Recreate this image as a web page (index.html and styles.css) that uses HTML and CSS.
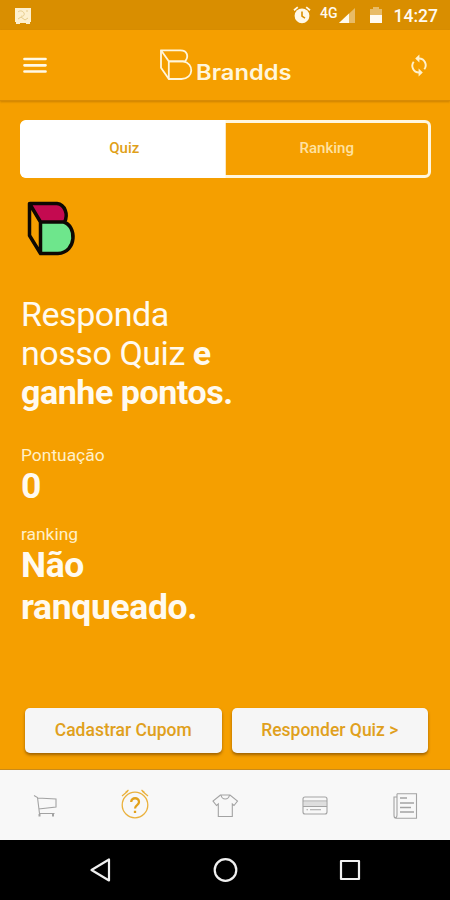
FILE: index.html
```
<!DOCTYPE html>
<html lang="pt-BR">
<head>
    <meta charset="UTF-8">
    <meta name="viewport" content="width=device-width, initial-scale=1">
    <title>Brandds - Quiz</title>
    <link rel="stylesheet" href="styles.css">
</head>
<body>
    <div class="app">
        <div class="status">
            <svg class="notice" width="18" height="18" viewBox="0 0 18 18">
                <path d="M1 1h16v14h-1v2h-4v-1H6v1H2v-2H1z" fill="#fdf0cf"/>
                <path d="M4 5c2-2 5-1 6 1s-1 4-3 3M4 12l3-2 4 3 3-2M12 4h2" fill="none" stroke="#e6cb8c"/>
            </svg>
            <svg class="alarm" width="18" height="18" viewBox="0 0 18 18">
                <circle cx="9" cy="9.8" r="7.4" fill="#fff8e8"/>
                <path d="M1 4.2l3.8-3.1M17 4.2l-3.8-3.1" stroke="#fff8e8" stroke-width="1.8"/>
                <path d="M9 5.5v4.6l3 2" fill="none" stroke="#d98e00" stroke-width="1.6"/>
            </svg>
            <span class="network">4G</span>
            <svg class="signal" width="17" height="16" viewBox="0 0 17 16">
                <path d="M16 0v15H0z" fill="#fff" opacity=".4"/>
                <path d="M10 5.6V15H0z" fill="#fffaf0"/>
            </svg>
            <svg class="battery" width="12" height="17" viewBox="0 0 12 17">
                <path d="M0 2h3V0h6v2h3v7H0z" fill="#fff" opacity=".4"/>
                <path d="M0 8h12v8H0z" fill="#fffaf0"/>
            </svg>
            <span class="time">14:27</span>
        </div>

        <header class="header">
            <svg class="menu" width="24" height="18" viewBox="0 0 24 18">
                <path d="M1.5 3h21M1.5 9.3h21M1.5 15.5h21" stroke="#fff9e6" stroke-width="2.7" stroke-linecap="round"/>
            </svg>
            <div class="brand">
                <svg width="35" height="36" viewBox="0 0 35 36">
                    <path d="M2 3.3h19.5c7 0 8.5 6.5 4.5 11H9.8z"/>
                    <path d="M9.8 14.3H24c11.5 1.5 11 17.7-1.5 17.7H9.8z"/>
                    <path d="M2 3.3v17.4L9.8 32"/>
                </svg>
                <span class="brand-name">Brandds</span>
            </div>
            <svg class="sync" width="18" height="24" viewBox="0 0 18 24">
                <path d="M9 5.5c5.6 0 8.6 6.3 5.3 10.8M9 19.5c-5.6 0-8.6-6.3-5.3-10.8" fill="none" stroke="#fff1cc" stroke-width="1.9"/>
                <path d="M9.4 1.5v8l-4.2-4zM8.6 15.5v8l4.2-4z" fill="#fff1cc"/>
            </svg>
        </header>

        <main class="content">
            <div class="segment">
                <button class="active">Quiz</button>
                <button>Ranking</button>
            </div>

            <svg class="logo" width="52" height="56" viewBox="0 0 52 56">
                <path d="M3.5 3.5l11 18.5v31.5L3.5 35.5z" fill="#f59f00"/>
                <path d="M3.5 3.5H31c9 2 10 12 7 18.5H14.5z" fill="#c40a50"/>
                <path d="M14.5 22H36c15 3 15 31-4 31.5H14.5z" fill="#6ee68c"/>
                <path d="M3.5 3.5H31c8 1 11.5 11 7.5 18.5h-24L3.5 3.5v32l11 18H32c19-1 19-28 5.5-31.5M14.5 22v31.5" fill="none" stroke="#0d0803" stroke-width="3.5" stroke-linejoin="round"/>
            </svg>

            <h1 class="title">Responda<br>nosso Quiz <b>e<br>ganhe pontos.</b></h1>

            <dl class="stats">
                <dt>Pontuação</dt>
                <dd>0</dd>
                <dt>ranking</dt>
                <dd>Não<br>ranqueado.</dd>
            </dl>

            <div class="actions">
                <button>Cadastrar Cupom</button>
                <button>Responder Quiz &gt;</button>
            </div>
        </main>

        <nav class="tabs">
            <svg width="30" height="32" viewBox="0 0 30 32">
                <path d="M4 5.5l3.5 2 2 16h15M7.5 8l18.5 1v8L8.5 19"/>
                <path d="M9.5 24v2.5M23 24v2.5" stroke-width="2"/>
            </svg>
            <svg class="active" width="30" height="32" viewBox="0 0 30 32">
                <circle cx="15" cy="15" r="12.8"/>
                <path d="M2 6l6-5M5.5 2.5l3-2.5M28 6l-6-5M24.5 2.5l-3-2.5"/>
                <path class="mark" d="M11.2 12c0-5 7.8-5 7.8 0 0 3.2-4 3-4 6.5M15 20.8v2.2"/>
            </svg>
            <svg width="30" height="32" viewBox="0 0 30 32">
                <path d="M10.5 5L3 11.2l3.5 4.3 1.8-1.5v12.5h14V14l1.7 1.5 3.5-4.3L20 5z"/>
                <path d="M11 5c1 5.3 7.5 5.3 8.5 0"/>
            </svg>
            <svg width="30" height="32" viewBox="0 0 30 32">
                <path d="M3.5 12h23v4h-23z" fill="#dedede" stroke="none"/>
                <rect x="3" y="7" width="24" height="17" rx="2"/>
                <path d="M3 11h24M3 16.5h24M6.5 19.8h1.5M10 19.8h11"/>
            </svg>
            <svg width="30" height="32" viewBox="0 0 30 32">
                <path d="M7 3.7h19.5v24.5H6c-2 0-2-1-2-3V7h3v18c0 2-1 3-2 2.5M7 3.7v4"/>
                <path d="M10 8h7M10 13h14M10 17.5h11M10 22h14" stroke-width="1.5"/>
            </svg>
        </nav>

        <div class="system">
            <svg width="26" height="26" viewBox="0 0 26 26"><path d="M21 2.5v21L3.5 13z"/></svg>
            <svg width="26" height="26" viewBox="0 0 26 26"><circle cx="12.5" cy="13" r="10.8"/></svg>
            <svg width="26" height="26" viewBox="0 0 26 26"><path d="M4 4h18v18H4z"/></svg>
        </div>
    </div>
</body>
</html>
```

FILE: styles.css
```
/* reset css */
* {
    box-sizing: border-box;
    margin: 0;
    padding: 0;
}
button {
    border: none;
    background: none;
    font: inherit;
    color: inherit;
}
svg {
    display: block;
    flex: none;
}
/* page */
.app {
    display: flex;
    flex-direction: column;
    width: 450px;
    height: 900px;
    background-color: #f59f00;
    font-family: Roboto, "Liberation Sans", sans-serif;
    color: #fffaf0;
    overflow: hidden;
}
/* status bar */
.status {
    display: flex;
    align-items: flex-start;
    height: 30px;
    padding: 7px 12px 0 14px;
    background-color: #d98e00;
}
.alarm {
    margin-left: 261px;
    margin-top: -1px;
}
.network {
    margin-left: 9px;
    font-size: 14px;
    line-height: 12px;
    font-weight: 500;
}
.signal {
    margin-left: 1px;
    margin-top: 1px;
}
.battery {
    margin-left: 14px;
}
.time {
    margin-left: auto;
    font-size: 17.5px;
    line-height: 18px;
    font-weight: 500;
}
/* header */
.header {
    display: flex;
    align-items: center;
    height: 71px;
    padding: 0 22px 0 23px;
    border-bottom: 1px solid #d88b05;
    box-shadow: 0 1px 2px rgba(150, 90, 0, .45);
}
.brand {
    display: flex;
    align-items: flex-end;
    margin-left: 112px;
}
.brand svg {
    fill: none;
    stroke: #fff6dc;
    stroke-width: 1.8;
    stroke-linejoin: round;
}
.brand-name {
    margin-left: 2px;
    margin-bottom: -1px;
    font-family: Inter, "Open Sans", sans-serif;
    font-size: 21px;
    line-height: 22px;
    font-weight: 600;
    color: #fff6dc;
    transform: scaleX(1.13);
    transform-origin: left;
}
.sync {
    margin-left: auto;
}
/* content */
.content {
    display: flex;
    flex-direction: column;
    flex: 1;
    padding: 19px 19px 16px 20px;
}
.segment {
    display: flex;
    height: 58px;
    border: 3px solid #fff6df;
    border-radius: 6px;
    font-size: 15px;
    font-weight: 500;
}
.segment button {
    flex: 1;
    padding-bottom: 2px;
    color: #ffe2a0;
}
.segment .active {
    background-color: #fff;
    box-shadow: 0 0 0 3px #fff;
    border-radius: 3px 0 0 3px;
    clip-path: inset(-3px 0 -3px -3px round 6px 0 0 6px);
    color: #e0a018;
}
.logo {
    margin: 22px 0 0 6px;
}
.title {
    margin: 39px 0 0 1px;
    font-size: 34px;
    line-height: 39px;
    font-weight: 400;
    letter-spacing: -.45px;
}
.title b {
    font-weight: 700;
}
.stats {
    margin: 32px 0 0 1px;
}
.stats dt {
    font-size: 17.4px;
    line-height: 22px;
    color: #fff0c8;
}
.stats dd {
    margin-top: -1px;
    font-size: 35.5px;
    line-height: 42px;
    font-weight: 700;
    letter-spacing: -.35px;
}
.stats dd + dt {
    margin-top: 16px;
}
/* buttons */
.actions {
    display: flex;
    gap: 10px;
    margin: auto 3px 0 5px;
}
.actions button {
    flex: 1;
    height: 45px;
    padding-bottom: 1px;
    border-radius: 5px;
    background-color: #f6f6f6;
    box-shadow: 0 2px 3px rgba(90, 50, 0, .55);
    font-size: 17.5px;
    font-weight: 500;
    color: #e0a01c;
}
/* tab bar */
.tabs {
    display: grid;
    grid-template-columns: repeat(5, 1fr);
    justify-items: center;
    align-items: center;
    height: 71px;
    padding-top: 2px;
    border-top: 1px solid #c98a1a;
    background-color: #f8f8f8;
}
.tabs svg {
    fill: none;
    stroke: #a3a3a3;
    stroke-width: 1.1;
    overflow: visible;
}
.tabs .active {
    stroke: #eab13c;
    stroke-width: 1.3;
}
.tabs .mark {
    stroke: #e2a11b;
    stroke-width: 2.3;
}
/* android buttons */
.system {
    display: flex;
    justify-content: space-between;
    align-items: center;
    height: 60px;
    padding: 0 87px 0 88px;
    background-color: #000;
}
.system svg {
    fill: none;
    stroke: #f0f0f0;
    stroke-width: 2.2;
    stroke-linejoin: round;
}
```
